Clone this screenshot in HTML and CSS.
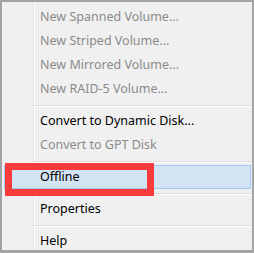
FILE: index.html
```html
<!DOCTYPE html>
<html lang="en">
<head>
  <meta charset="UTF-8" />
  <title>Disk context menu</title>
  <link rel="stylesheet" href="styles.css">
</head>
<body>
  <div class="menu">
    <div class="item disabled">New Spanned Volume...</div>
    <div class="item disabled">New Striped Volume...</div>
    <div class="item disabled">New Mirrored Volume...</div>
    <div class="item disabled">New RAID-5 Volume...</div>
    <div class="sep"></div>
    <div class="item">Convert to Dynamic Disk...</div>
    <div class="item disabled">Convert to GPT Disk</div>
    <div class="sep"></div>
    <div class="item active">Offline</div>
    <div class="sep"></div>
    <div class="item">Properties</div>
    <div class="sep"></div>
    <div class="item">Help</div>

    <div class="callout"></div>
  </div>
</body>
</html>
```

FILE: styles.css
```css
html, body {
  margin: 0;
  height: 100%;
}
body {
  background: #a3a3a3;
  padding: 2px 2px 3px 2px;
  box-sizing: border-box;
  font-family: "Noto Sans", "Open Sans", sans-serif;
  font-size: 12.5px;
}
.menu {
  position: relative;
  height: 100%;
  box-sizing: border-box;
  padding-top: 3px;
  /* gutter line on the left */
  background:
    linear-gradient(90deg, transparent 31px, #e2e3e3 31px, #e2e3e3 32px, #fff 32px, #fff 33px, transparent 33px),
    #f0f0f0;
  overflow: hidden;
}
.item {
  height: 24px;
  line-height: 24px;
  padding-left: 38px;
  color: #000;
  white-space: nowrap;
}
.item.disabled {
  color: #8b8b8b;
}
.item.active {
  height: 22px;
  line-height: 22px;
  margin: 0 1px 0 2px;
  padding-left: 35px;
  background: rgba(204, 225, 245, 0.85);
  border: 1px solid #9ecbf3;
}
.sep {
  height: 8px;
  margin-left: 32px;
  background: linear-gradient(180deg, transparent 4px, #dcdcdc 4px, #dcdcdc 5px, #fff 5px, #fff 6px, transparent 6px);
}
.callout {
  position: absolute;
  left: 3px;
  top: 161px;
  width: 135px;
  height: 19px;
  border: 7px solid #f93b3b;
}
```
